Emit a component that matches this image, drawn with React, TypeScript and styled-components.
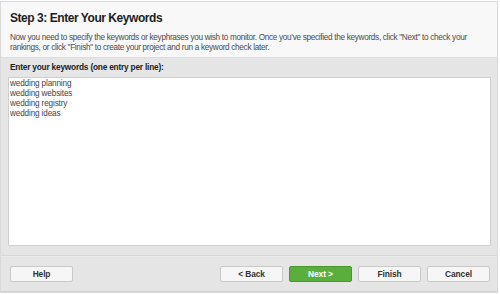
import React from "react";
import styled, { createGlobalStyle } from "styled-components";

const Global = createGlobalStyle`
  html, body { margin: 0; padding: 0; background: #ffffff; }
  body { font-family: "Liberation Sans", Arial, sans-serif; }
`;

const Frame = styled.div`
  width: 498px;
  height: 292px;
  box-sizing: border-box;
  border: 1px solid #d9d9d9;
  background: #f8f8f8;
  display: flex;
  flex-direction: column;
  margin-top: 1px;
`;

const Header = styled.div`
  padding: 9px 9px 0 9px;
  height: 55px;
  box-sizing: border-box;
`;

const Title = styled.h1`
  margin: 0;
  font-size: 12px;
  font-weight: bold;
  color: #1e1e1e;
  line-height: 15px;
  letter-spacing: -0.45px;
`;

const Desc = styled.p`
  margin: 7px 0 0 0;
  font-size: 8.2px;
  line-height: 10px;
  letter-spacing: -0.3px;
  color: #4a4a4a;
`;

const Body = styled.div`
  flex: 1;
  background: #e5e5e5;
  border-top: 1px solid #dcdcdc;
  border-bottom: 1px solid #d2d2d2;
  display: flex;
  flex-direction: column;
`;

const Entry = styled.div`
  padding: 4px 6px 0 7px;
  display: flex;
  flex-direction: column;
  height: 198px;
  box-sizing: border-box;
  border-bottom: 1px solid #d6d6d6;
`;

const Label = styled.label`
  font-size: 8.3px;
  font-weight: bold;
  color: #222;
  line-height: 10px;
  letter-spacing: -0.2px;
  margin: 0 0 5px 2px;
`;

const KeywordBox = styled.textarea`
  flex: 0 0 169px;
  resize: none;
  box-sizing: border-box;
  border: 1px solid #cfcfcf;
  border-radius: 1px;
  background: #fff;
  margin: 0;
  padding: 1px 1px;
  font-family: "Liberation Sans", Arial, sans-serif;
  font-size: 8.2px;
  line-height: 10px;
  letter-spacing: -0.15px;
  color: #444;
  outline: none;
  overflow: hidden;
`;

const Footer = styled.div`
  flex: 1;
  display: flex;
  align-items: center;
  padding: 0 7px 0 9px;
  border-top: 1px solid #ececec;
`;

const Spacer = styled.div`
  flex: 1;
`;

const Buttons = styled.div`
  display: flex;
  gap: 6px;
`;

const Button = styled.button<{ $primary?: boolean }>`
  width: 63px;
  height: 16px;
  box-sizing: border-box;
  border-radius: 2px;
  border: 1px solid ${(p) => (p.$primary ? "#4a9630" : "#c9c9c9")};
  background: ${(p) => (p.$primary ? "#5aae3c" : "#f6f6f6")};
  color: ${(p) => (p.$primary ? "#ffffff" : "#333")};
  font-family: "Liberation Sans", Arial, sans-serif;
  font-size: 8.4px;
  font-weight: bold;
  letter-spacing: -0.1px;
  padding: 0;
  line-height: 14px;
`;

export default function App() {
  return (
    <>
      <Global />
      <Frame>
        <Header>
          <Title>Step 3: Enter Your Keywords</Title>
          <Desc>
            Now you need to specify the keywords or keyphrases you wish to monitor. Once you've specified the keywords, click "Next" to check your
            rankings, or click "Finish" to create your project and run a keyword check later.
          </Desc>
        </Header>
        <Body>
          <Entry>
            <Label>Enter your keywords (one entry per line):</Label>
            <KeywordBox
              readOnly
              value={"wedding planning\nwedding websites\nwedding registry\nwedding ideas"}
            />
          </Entry>
          <Footer>
            <Button>Help</Button>
            <Spacer />
            <Buttons>
              <Button>&lt; Back</Button>
              <Button $primary>Next &gt;</Button>
              <Button>Finish</Button>
              <Button>Cancel</Button>
            </Buttons>
          </Footer>
        </Body>
      </Frame>
    </>
  );
}
